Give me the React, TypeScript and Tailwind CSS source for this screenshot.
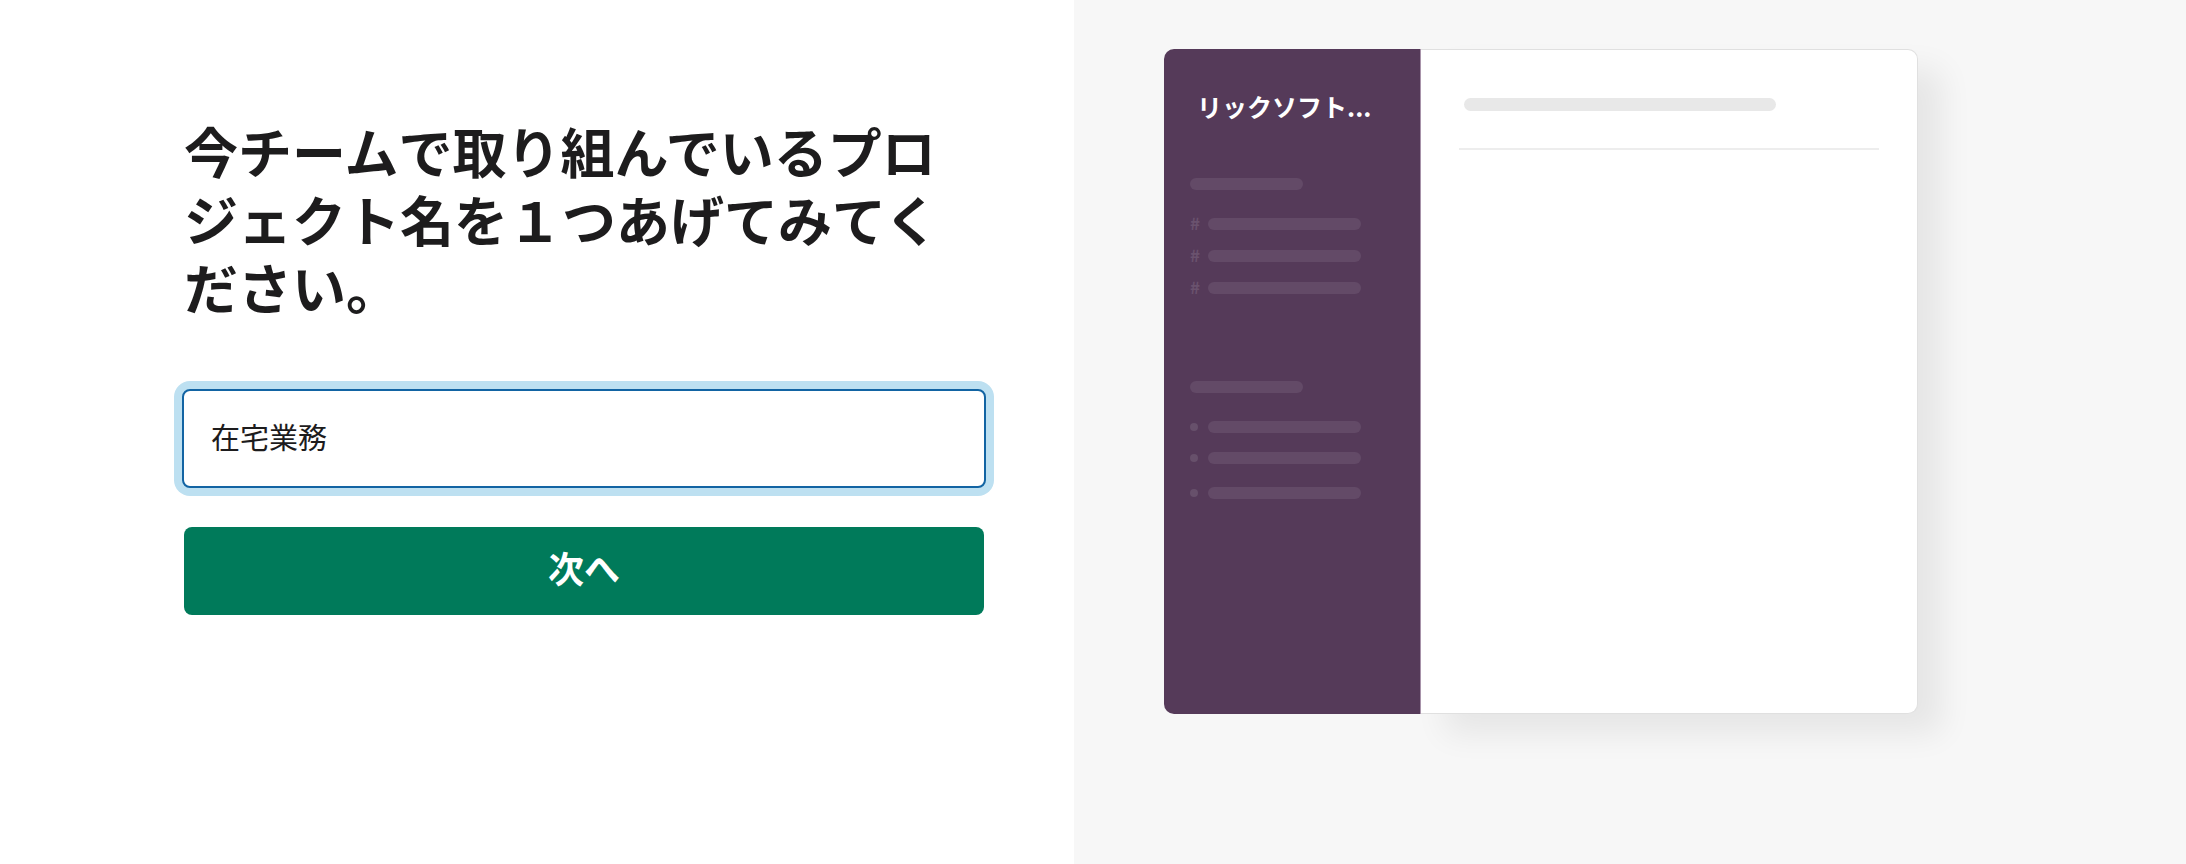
const font = { fontFamily: '"Noto Sans CJK JP", "Noto Sans", sans-serif' };

const SidebarBar = ({ mark }: { mark: 'hash' | 'dot' }) => (
  <div className="flex h-[12px] items-center">
    {mark === 'hash' ? (
      <span className="-mt-[3px] w-[18px] text-[17px] leading-none font-bold text-[#6a526e]">#</span>
    ) : (
      <span className="mr-[10px] h-[8px] w-[8px] rounded-full bg-[#67506b]" />
    )}
    <div className="h-[12px] w-[153px] rounded-full bg-[#634a67]" />
  </div>
);

const App = () => {
  return (
    <div className="flex h-[864px] w-full" style={font}>
      <div className="w-[1074px] bg-white pl-[184px] pt-[117px]">
        <h1 className="w-[770px] text-[54px] leading-[68px] font-bold text-[#1d1c1d]">
          今チームで取り組んでいるプロジェクト名を１つあげてみてください。
        </h1>
        <input
          type="text"
          readOnly
          value="在宅業務"
          className="mt-[68px] -ml-[2px] block h-[99px] w-[804px] rounded-[8px] border-2 border-[#1264a3] bg-white px-[27px] pb-[6px] text-[29px] text-[#1d1c1d] ring-8 ring-[#bde0f1] outline-none"
        />
        <button
          type="button"
          className="mt-[39px] flex h-[88px] w-[800px] items-center justify-center rounded-[8px] bg-[#007a5a] pb-[8px] text-[36px] font-bold text-white"
        >
          次へ
        </button>
      </div>

      <div className="flex-1 bg-[#f7f7f7] pl-[90px] pt-[49px]">
        <div className="flex h-[665px] w-[754px]">
          <div className="flex w-[257px] flex-col rounded-l-[10px] border-r border-[#a893aa] bg-[#553a59] pl-[26px]">
            <div className="mt-[41px] pl-[7px] text-[25px] leading-[32px] font-bold text-white">リックソフト...</div>
            <div className="mt-[56px] h-[12px] w-[113px] rounded-full bg-[#634a67]" />
            <div className="mt-[28px] flex flex-col gap-[20px]">
              <SidebarBar mark="hash" />
              <SidebarBar mark="hash" />
              <SidebarBar mark="hash" />
            </div>
            <div className="mt-[87px] h-[12px] w-[113px] rounded-full bg-[#634a67]" />
            <div className="mt-[28px] flex flex-col">
              <SidebarBar mark="dot" />
              <div className="mt-[19px]">
                <SidebarBar mark="dot" />
              </div>
              <div className="mt-[23px]">
                <SidebarBar mark="dot" />
              </div>
            </div>
          </div>
          <div className="flex flex-1 flex-col rounded-r-[10px] border border-l-0 border-[#e0e0e0] bg-white shadow-[24px_20px_32px_rgba(0,0,0,0.07)]">
            <div className="mt-[48px] ml-[43px] h-[13px] w-[312px] rounded-full bg-[#e8e8e8]" />
            <div className="mx-[38px] mt-[37px] h-[2px] bg-[#ededed]" />
          </div>
        </div>
      </div>
    </div>
  );
};

export default App;
